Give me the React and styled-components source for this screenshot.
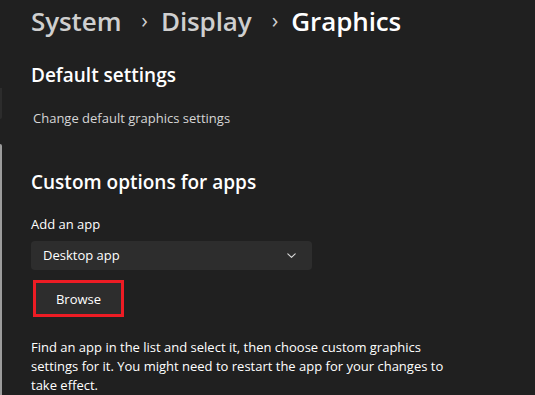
import React from 'react';
import styled, { createGlobalStyle } from 'styled-components';

const GlobalStyle = createGlobalStyle`
  html, body {
    margin: 0;
    padding: 0;
    background: #202020;
  }
  body {
    font-family: 'Open Sans', 'Noto Sans', sans-serif;
    color: #ffffff;
  }
`;

const App = () => {
  return (
    <Page>
      <GlobalStyle />
      <Rail>
        <RailTab />
        <RailLine />
      </Rail>
      <Content>
        <Breadcrumb>
          <Crumb>System</Crumb>
          <Sep>›</Sep>
          <Crumb>Display</Crumb>
          <Sep>›</Sep>
          <Crumb current>Graphics</Crumb>
        </Breadcrumb>

        <SectionTitle top={20}>Default settings</SectionTitle>
        <LinkText>Change default graphics settings</LinkText>

        <SectionTitle top={42}>Custom options for apps</SectionTitle>
        <Label>Add an app</Label>
        <Select>
          <span>Desktop app</span>
          <svg width="9" height="5" viewBox="0 0 9 5" fill="none">
            <path d="M0.8 0.8l3.7 3.5 3.7-3.5" stroke="#d8d8d8" strokeWidth="1.1" strokeLinecap="round" strokeLinejoin="round" />
          </svg>
        </Select>
        <Highlight>
          <Button>Browse</Button>
        </Highlight>
        <Paragraph>
          Find an app in the list and select it, then choose custom graphics
          settings for it. You might need to restart the app for your changes to
          take effect.
        </Paragraph>
      </Content>
    </Page>
  );
};

export default App;

const Page = styled.div`
  display: flex;
  width: 535px;
  height: 395px;
  overflow: hidden;
  background: #202020;
`;

const Rail = styled.div`
  width: 2px;
  display: flex;
  flex-direction: column;
  padding-top: 88px;
`;

const RailTab = styled.div`
  height: 31px;
  background: #2c2c2c;
  border-bottom-right-radius: 2px;
`;

const RailLine = styled.div`
  margin-top: 25px;
  flex: 1;
  background: #9c9c9c;
  border-top-right-radius: 2px;
`;

const Content = styled.div`
  flex: 1;
  padding-left: 29px;
  display: flex;
  flex-direction: column;
  align-items: flex-start;
`;

const Breadcrumb = styled.div`
  display: flex;
  align-items: center;
  height: 46px;
`;

const Crumb = styled.span`
  font-size: 26px;
  font-weight: 600;
  letter-spacing: -0.1px;
  color: ${(p) => (p.current ? '#ffffff' : '#cfcfcf')};
`;

const Sep = styled.span`
  font-size: 22px;
  color: #cfcfcf;
  padding: 0 13px 0 20px;
  transform: translateY(-2px);
`;

const SectionTitle = styled.h2`
  margin: ${(p) => p.top}px 0 0 0;
  font-size: 19px;
  font-weight: 600;
  line-height: 26px;
  color: #ffffff;
`;

const LinkText = styled.div`
  margin: 21px 0 0 2px;
  font-size: 13px;
  line-height: 18px;
  color: #d6d6d6;
`;

const Label = styled.div`
  margin-top: 20px;
  font-size: 13px;
  line-height: 18px;
  color: #ffffff;
`;

const Select = styled.div`
  margin-top: 8px;
  width: 281px;
  height: 32px;
  box-sizing: border-box;
  padding: 0 16px 0 12px;
  display: flex;
  align-items: center;
  justify-content: space-between;
  background: #2d2d2d;
  border-radius: 4px;
  font-size: 13px;
  color: #ffffff;
`;

const Highlight = styled.div`
  margin: 10px 0 0 2px;
  border: 3px solid #ed1c24;
  display: flex;
`;

const Button = styled.div`
  width: 85px;
  height: 31px;
  display: flex;
  align-items: center;
  justify-content: center;
  background: #2d2d2d;
  font-size: 13px;
  color: #ffffff;
`;

const Paragraph = styled.p`
  margin: 21px 0 0 0;
  width: 430px;
  font-size: 13px;
  line-height: 19px;
  color: #ffffff;
`;
